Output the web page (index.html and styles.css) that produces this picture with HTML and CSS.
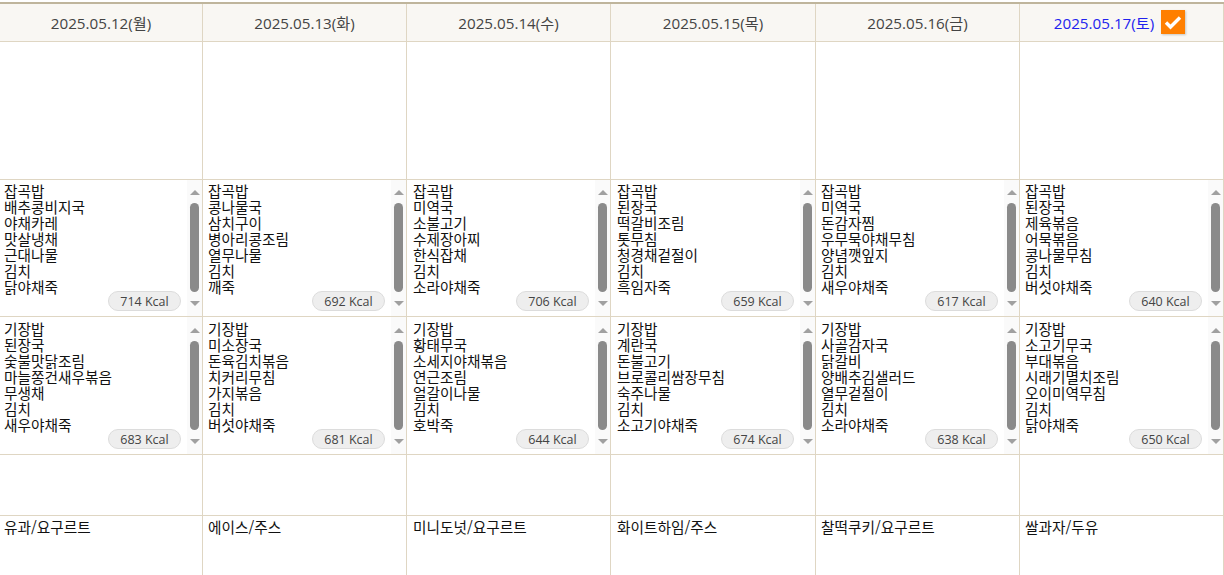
FILE: index.html
```html
<!DOCTYPE html>
<html lang="ko">
<head>
<meta charset="utf-8">
<title>식단표</title>
<link rel="stylesheet" href="styles.css">
</head>
<body>
<div class="calendar">
  <div class="cell head">2025.05.12(월)</div>
  <div class="cell head">2025.05.13(화)</div>
  <div class="cell head">2025.05.14(수)</div>
  <div class="cell head">2025.05.15(목)</div>
  <div class="cell head">2025.05.16(금)</div>
  <div class="cell head today">2025.05.17(토)<span class="check"><svg width="24" height="24" viewBox="0 0 24 24"><path d="M5 12.5l4.5 4.5 9.5-9.5" fill="none" stroke="#fff" stroke-width="3.4"/></svg></span></div>

  <div class="cell"></div><div class="cell"></div><div class="cell"></div><div class="cell"></div><div class="cell"></div><div class="cell"></div>

  <div class="cell meal"><div class="list">잡곡밥<br>배추콩비지국<br>야채카레<br>맛살냉채<br>근대나물<br>김치<br>닭야채죽</div><div class="bar"><i class="up"></i><b></b><i class="down"></i></div><span class="kcal">714 Kcal</span></div>
  <div class="cell meal"><div class="list">잡곡밥<br>콩나물국<br>삼치구이<br>병아리콩조림<br>열무나물<br>김치<br>깨죽</div><div class="bar"><i class="up"></i><b></b><i class="down"></i></div><span class="kcal">692 Kcal</span></div>
  <div class="cell meal"><div class="list">잡곡밥<br>미역국<br>소불고기<br>수제장아찌<br>한식잡채<br>김치<br>소라야채죽</div><div class="bar"><i class="up"></i><b></b><i class="down"></i></div><span class="kcal">706 Kcal</span></div>
  <div class="cell meal"><div class="list">잡곡밥<br>된장국<br>떡갈비조림<br>톳무침<br>청경채겉절이<br>김치<br>흑임자죽</div><div class="bar"><i class="up"></i><b></b><i class="down"></i></div><span class="kcal">659 Kcal</span></div>
  <div class="cell meal"><div class="list">잡곡밥<br>미역국<br>돈감자찜<br>우무묵야채무침<br>양념깻잎지<br>김치<br>새우야채죽</div><div class="bar"><i class="up"></i><b></b><i class="down"></i></div><span class="kcal">617 Kcal</span></div>
  <div class="cell meal"><div class="list">잡곡밥<br>된장국<br>제육볶음<br>어묵볶음<br>콩나물무침<br>김치<br>버섯야채죽</div><div class="bar"><i class="up"></i><b></b><i class="down"></i></div><span class="kcal">640 Kcal</span></div>

  <div class="cell meal dinner"><div class="list">기장밥<br>된장국<br>숯불맛닭조림<br>마늘쫑건새우볶음<br>무생채<br>김치<br>새우야채죽</div><div class="bar"><i class="up"></i><b></b><i class="down"></i></div><span class="kcal">683 Kcal</span></div>
  <div class="cell meal dinner"><div class="list">기장밥<br>미소장국<br>돈육김치볶음<br>치커리무침<br>가지볶음<br>김치<br>버섯야채죽</div><div class="bar"><i class="up"></i><b></b><i class="down"></i></div><span class="kcal">681 Kcal</span></div>
  <div class="cell meal dinner"><div class="list">기장밥<br>황태무국<br>소세지야채볶음<br>연근조림<br>얼갈이나물<br>김치<br>호박죽</div><div class="bar"><i class="up"></i><b></b><i class="down"></i></div><span class="kcal">644 Kcal</span></div>
  <div class="cell meal dinner"><div class="list">기장밥<br>계란국<br>돈불고기<br>브로콜리쌈장무침<br>숙주나물<br>김치<br>소고기야채죽</div><div class="bar"><i class="up"></i><b></b><i class="down"></i></div><span class="kcal">674 Kcal</span></div>
  <div class="cell meal dinner"><div class="list">기장밥<br>사골감자국<br>닭갈비<br>양배추김샐러드<br>열무겉절이<br>김치<br>소라야채죽</div><div class="bar"><i class="up"></i><b></b><i class="down"></i></div><span class="kcal">638 Kcal</span></div>
  <div class="cell meal dinner"><div class="list">기장밥<br>소고기무국<br>부대볶음<br>시래기멸치조림<br>오이미역무침<br>김치<br>닭야채죽</div><div class="bar"><i class="up"></i><b></b><i class="down"></i></div><span class="kcal">650 Kcal</span></div>

  <div class="cell"></div><div class="cell"></div><div class="cell"></div><div class="cell"></div><div class="cell"></div><div class="cell"></div>

  <div class="cell snack">유과/요구르트</div>
  <div class="cell snack">에이스/주스</div>
  <div class="cell snack">미니도넛/요구르트</div>
  <div class="cell snack">화이트하임/주스</div>
  <div class="cell snack">찰떡쿠키/요구르트</div>
  <div class="cell snack">쌀과자/두유</div>
</div>
</body>
</html>
```
FILE: styles.css
```css
html, body {
  margin: 0;
  height: 575px;
  overflow: hidden;
  background: #fff;
}
body {
  padding-top: 2px;
  box-sizing: border-box;
  font-family: "Noto Sans CJK KR", "Noto Sans", sans-serif;
  font-size: 14.67px;
  color: #111;
}
.calendar {
  display: grid;
  grid-template-columns: 203px 204px 204px 205px 204px 204px;
  grid-template-rows: 38px 138px 137px 138px 61px 60px;
  border-top: 2px solid #bfb59c;
}
.cell {
  position: relative;
  border-right: 1px solid #dfd6c3;
  border-bottom: 1px solid #dfd6c3;
  box-sizing: border-box;
  min-width: 0;
}
.cell:nth-last-child(-n+6) {
  border-bottom: 0;
}
.head {
  display: flex;
  align-items: center;
  justify-content: center;
  gap: 7px;
  padding-bottom: 2px;
  background: #f9f7f3;
  color: #444;
  font-family: "Open Sans", "Noto Sans CJK KR", sans-serif;
  font-size: 15.2px;
}
.today {
  color: #2222ee;
  padding-right: 4px;
}
.check {
  display: flex;
  width: 24px;
  height: 24px;
  margin-top: 1px;
  background: #ff7f00;
  box-shadow: 1px 1px 2px rgba(0, 0, 0, .2);
}
.meal {
  display: flex;
  overflow: hidden;
}
.list {
  flex: 1;
  padding: 3px 0 0 5px;
  line-height: 16px;
  white-space: nowrap;
}
.meal:nth-child(6n+1) .list {
  padding-left: 4px;
}
.meal:nth-child(6n+3) .list,
.meal:nth-child(6n+4) .list {
  padding-left: 6px;
}
.dinner .list {
  padding-top: 4px;
}
.bar {
  width: 15px;
  display: flex;
  flex-direction: column;
  align-items: center;
  background: #fafafa;
  padding: 10px 0;
  box-sizing: border-box;
}
.dinner .bar {
  padding-top: 11px;
}
.bar b {
  flex: 1;
  width: 9px;
  margin: 8px 0 9px;
  border-radius: 5px;
  background: #8a8a8a;
}
.bar i {
  width: 0;
  height: 0;
  border-left: 5px solid transparent;
  border-right: 5px solid transparent;
}
.bar .up {
  border-bottom: 5px solid #a0a0a0;
}
.bar .down {
  border-top: 5px solid #a0a0a0;
}
.kcal {
  position: absolute;
  right: 21px;
  bottom: 5px;
  width: 73px;
  height: 20px;
  box-sizing: border-box;
  border: 1px solid #dcdcdc;
  border-radius: 10px;
  background: #eee;
  color: #444;
  font-family: "Open Sans", sans-serif;
  font-size: 12.5px;
  line-height: 20px;
  text-align: center;
}
.snack {
  padding: 2px 0 0 5px;
  line-height: 18px;
}
.snack:nth-child(6n+1) {
  padding-left: 4px;
}
.snack:nth-child(6n+3),
.snack:nth-child(6n+4) {
  padding-left: 6px;
}
```
